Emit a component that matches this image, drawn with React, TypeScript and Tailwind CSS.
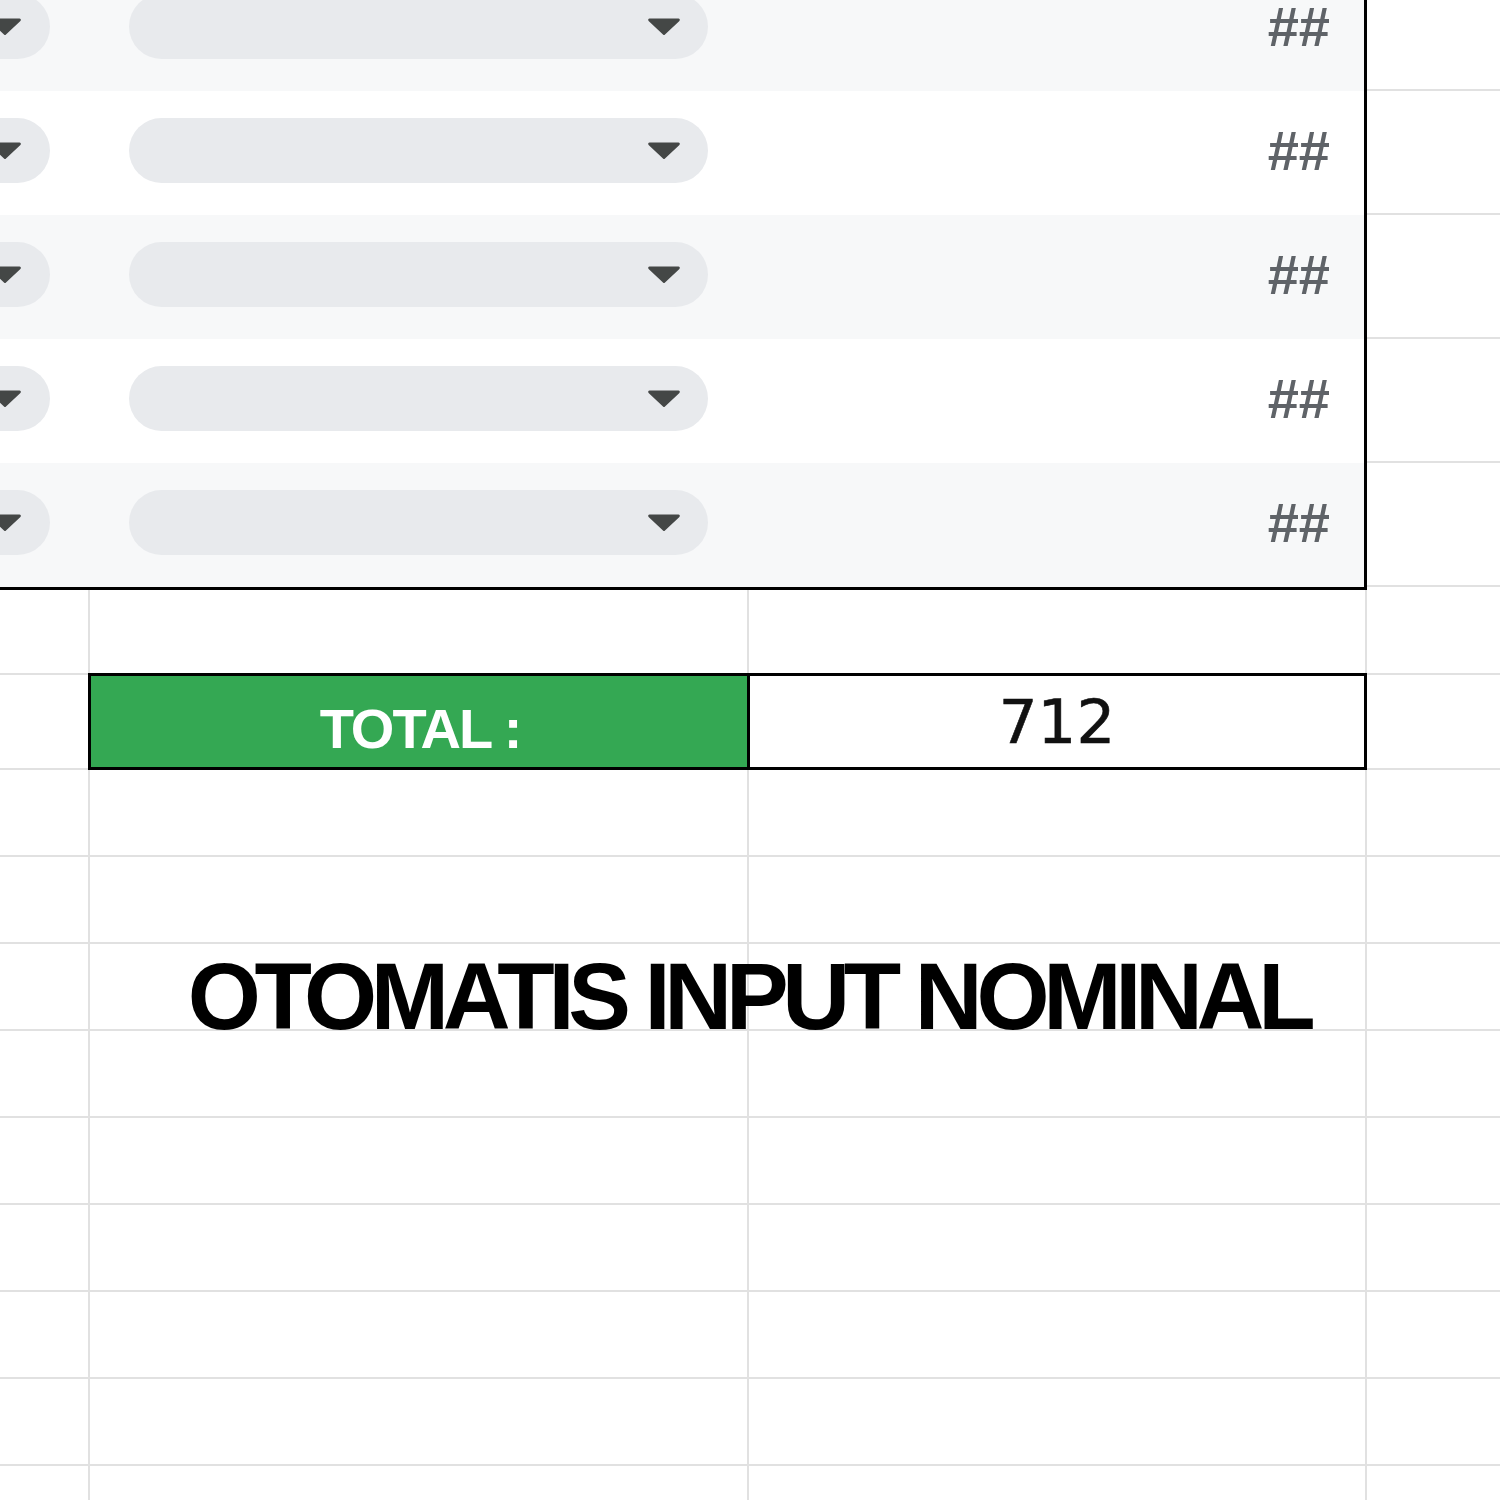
import React from "react";
import { clsx } from "clsx";

const rows = [true, false, true, false, true];

function Caret() {
  return (
    <svg width="34" height="19" viewBox="0 0 34 19" className="shrink-0">
      <path
        d="M2.6 1.5h28.8a1.4 1.4 0 0 1 1 2.4L18 17.4a1.4 1.4 0 0 1-2 0L1.6 3.9a1.4 1.4 0 0 1 1-2.4z"
        fill="#444746"
      />
    </svg>
  );
}

function SheetRow({ banded, first }: { banded: boolean; first?: boolean }) {
  return (
    <div className={clsx("flex h-[124px]", first && "-mt-[33px]")}>
      <div
        className={clsx(
          "flex w-[1367px] shrink-0 items-center border-r-[3px] border-black pb-[5px]",
          banded ? "bg-[#f7f8f9]" : "bg-white"
        )}
      >
        <div className="ml-[-60px] flex h-[65px] w-[110px] shrink-0 items-center justify-end rounded-full bg-[#e8eaed] pr-[28px]">
          <Caret />
        </div>
        <div className="ml-[79px] flex h-[65px] w-[579px] shrink-0 items-center justify-end rounded-full bg-[#e8eaed] pr-[27px]">
          <Caret />
        </div>
        <span className="ml-auto pr-[34px] text-[56px] font-bold leading-none text-[#5f6368]">##</span>
      </div>
      <div className="flex-1 border-b-2 border-[#e1e1e1]" />
    </div>
  );
}

function GridRow({ h = "h-[87px]", bottom = true }: { h?: string; bottom?: boolean }) {
  return (
    <div className={clsx("flex shrink-0", h, bottom && "border-b-2 border-[#e1e1e1]")}>
      <div className="w-[90px] shrink-0 border-r-2 border-[#e1e1e1]" />
      <div className="w-[659px] shrink-0 border-r-2 border-[#e1e1e1]" />
      <div className="w-[618px] shrink-0 border-r-2 border-[#e1e1e1]" />
      <div className="flex-1" />
    </div>
  );
}

export default function App() {
  return (
    <div className="relative h-[1500px] w-[1500px] overflow-hidden bg-white font-['Liberation_Sans',Arial,sans-serif]">
      {/* dropdown table */}
      {rows.map((banded, i) => (
        <SheetRow key={i} banded={banded} first={i === 0} />
      ))}
      <div className="flex h-[3px]">
        <div className="w-[1367px] bg-black" />
        <div className="flex-1" />
      </div>

      {/* sheet below */}
      <GridRow h="h-[83px]" bottom={false} />
      <div className="flex h-[97px]">
        <div className="w-[88px] shrink-0 border-y-2 border-[#e1e1e1]" />
        <div className="flex w-[1279px] shrink-0 border-[3px] border-black">
          <div className="flex w-[659px] shrink-0 items-center justify-center border-r-[3px] border-black bg-[#34a853] pl-[2px] pt-[14px]">
            <span className="text-[56px] font-bold leading-none tracking-[-2px] text-white">TOTAL :</span>
          </div>
          <div className="flex flex-1 items-center justify-center bg-white">
            <span className="font-['DejaVu_Sans',sans-serif] text-[61px] leading-none text-[#111] [-webkit-text-stroke:0.6px_#111]">
              712
            </span>
          </div>
        </div>
        <div className="flex-1 border-y-2 border-[#e1e1e1]" />
      </div>
      {Array.from({ length: 9 }).map((_, i) => (
        <GridRow key={i} />
      ))}

      {/* caption over the sheet */}
      <div className="absolute left-0 top-[950px] w-full pr-[3px] text-center text-[94px] font-bold leading-none tracking-[-6.3px] text-black">
        OTOMATIS INPUT NOMINAL
      </div>
    </div>
  );
}
